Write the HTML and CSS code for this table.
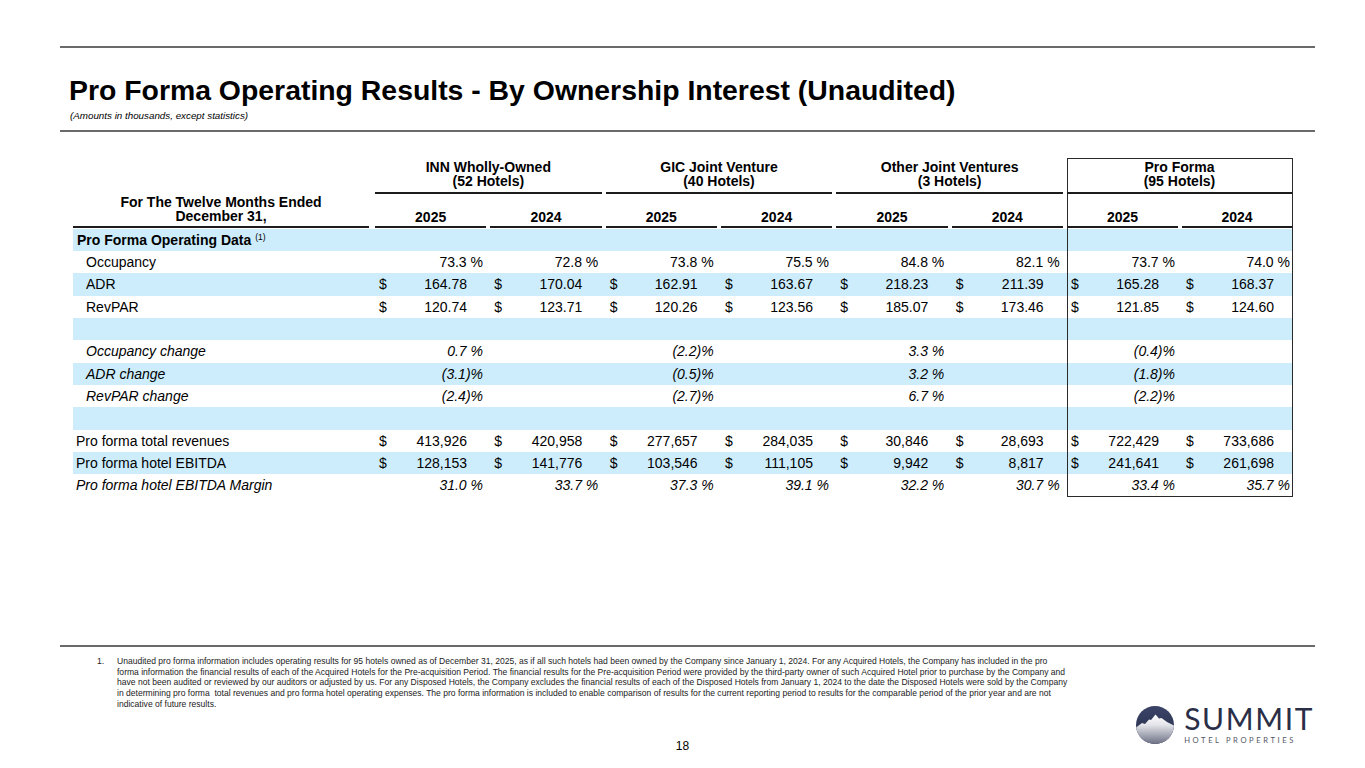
FILE: index.html
```html
<!DOCTYPE html>
<html lang="en">
<head>
<meta charset="utf-8">
<title>Pro Forma Operating Results</title>
<link rel="stylesheet" href="styles.css">
</head>
<body>
<div class="page">
  <div class="rule rule-top"></div>
  <header class="head">
    <h1 class="title">Pro Forma Operating Results - By Ownership Interest (Unaudited)</h1>
    <p class="subtitle">(Amounts in thousands, except statistics)</p>
  </header>
  <div class="rule rule-mid"></div>

  <div class="tbl">
    <div class="row hrow1">
      <div class="c"></div>
      <div class="c grp"><div class="ul">INN Wholly-Owned<br>(52 Hotels)</div></div>
      <div class="c grp"><div class="ul">GIC Joint Venture<br>(40 Hotels)</div></div>
      <div class="c grp"><div class="ul">Other Joint Ventures<br>(3 Hotels)</div></div>
      <div class="c grp pf-top"><div class="ul ul-last">Pro Forma<br>(95 Hotels)</div></div>
    </div>
    <div class="row hrow2">
      <div class="c hc"><div class="ul ul-lbl">For The Twelve Months Ended<br>December 31,</div></div>
      <div class="c hc"><div class="ul">2025</div></div>
      <div class="c hc"><div class="ul">2024</div></div>
      <div class="c hc"><div class="ul">2025</div></div>
      <div class="c hc"><div class="ul">2024</div></div>
      <div class="c hc"><div class="ul">2025</div></div>
      <div class="c hc"><div class="ul">2024</div></div>
      <div class="c hc pl"><div class="ul">2025</div></div>
      <div class="c hc pr"><div class="ul ul-last">2024</div></div>
    </div>

    <div class="row drow b">
      <div class="c lbl sec">Pro Forma Operating Data <sup>(1)</sup></div>
      <div class="c"></div><div class="c"></div><div class="c"></div><div class="c"></div><div class="c"></div><div class="c"></div>
      <div class="c pl"></div><div class="c pr"></div>
    </div>

    <div class="row drow">
      <div class="c lbl ind">Occupancy</div>
      <div class="c v"><div class="vi"><span class="pct">73.3 %</span></div></div>
      <div class="c v"><div class="vi"><span class="pct">72.8 %</span></div></div>
      <div class="c v"><div class="vi"><span class="pct">73.8 %</span></div></div>
      <div class="c v"><div class="vi"><span class="pct">75.5 %</span></div></div>
      <div class="c v"><div class="vi"><span class="pct">84.8 %</span></div></div>
      <div class="c v"><div class="vi"><span class="pct">82.1 %</span></div></div>
      <div class="c v pl"><div class="vi"><span class="pct">73.7 %</span></div></div>
      <div class="c v pr"><div class="vi"><span class="pct">74.0 %</span></div></div>
    </div>

    <div class="row drow b">
      <div class="c lbl ind">ADR</div>
      <div class="c v"><div class="vi"><span>$</span><span class="num">164.78</span></div></div>
      <div class="c v"><div class="vi"><span>$</span><span class="num">170.04</span></div></div>
      <div class="c v"><div class="vi"><span>$</span><span class="num">162.91</span></div></div>
      <div class="c v"><div class="vi"><span>$</span><span class="num">163.67</span></div></div>
      <div class="c v"><div class="vi"><span>$</span><span class="num">218.23</span></div></div>
      <div class="c v"><div class="vi"><span>$</span><span class="num">211.39</span></div></div>
      <div class="c v pl"><div class="vi"><span>$</span><span class="num">165.28</span></div></div>
      <div class="c v pr"><div class="vi"><span>$</span><span class="num">168.37</span></div></div>
    </div>

    <div class="row drow">
      <div class="c lbl ind">RevPAR</div>
      <div class="c v"><div class="vi"><span>$</span><span class="num">120.74</span></div></div>
      <div class="c v"><div class="vi"><span>$</span><span class="num">123.71</span></div></div>
      <div class="c v"><div class="vi"><span>$</span><span class="num">120.26</span></div></div>
      <div class="c v"><div class="vi"><span>$</span><span class="num">123.56</span></div></div>
      <div class="c v"><div class="vi"><span>$</span><span class="num">185.07</span></div></div>
      <div class="c v"><div class="vi"><span>$</span><span class="num">173.46</span></div></div>
      <div class="c v pl"><div class="vi"><span>$</span><span class="num">121.85</span></div></div>
      <div class="c v pr"><div class="vi"><span>$</span><span class="num">124.60</span></div></div>
    </div>

    <div class="row drow b">
      <div class="c lbl"></div>
      <div class="c"></div><div class="c"></div><div class="c"></div><div class="c"></div><div class="c"></div><div class="c"></div>
      <div class="c pl"></div><div class="c pr"></div>
    </div>

    <div class="row drow it">
      <div class="c lbl ind">Occupancy change</div>
      <div class="c v"><div class="vi"><span class="pct">0.7 %</span></div></div>
      <div class="c"></div>
      <div class="c v"><div class="vi"><span class="pct">(2.2)%</span></div></div>
      <div class="c"></div>
      <div class="c v"><div class="vi"><span class="pct">3.3 %</span></div></div>
      <div class="c"></div>
      <div class="c v pl"><div class="vi"><span class="pct">(0.4)%</span></div></div>
      <div class="c pr"></div>
    </div>

    <div class="row drow b it">
      <div class="c lbl ind">ADR change</div>
      <div class="c v"><div class="vi"><span class="pct">(3.1)%</span></div></div>
      <div class="c"></div>
      <div class="c v"><div class="vi"><span class="pct">(0.5)%</span></div></div>
      <div class="c"></div>
      <div class="c v"><div class="vi"><span class="pct">3.2 %</span></div></div>
      <div class="c"></div>
      <div class="c v pl"><div class="vi"><span class="pct">(1.8)%</span></div></div>
      <div class="c pr"></div>
    </div>

    <div class="row drow it">
      <div class="c lbl ind">RevPAR change</div>
      <div class="c v"><div class="vi"><span class="pct">(2.4)%</span></div></div>
      <div class="c"></div>
      <div class="c v"><div class="vi"><span class="pct">(2.7)%</span></div></div>
      <div class="c"></div>
      <div class="c v"><div class="vi"><span class="pct">6.7 %</span></div></div>
      <div class="c"></div>
      <div class="c v pl"><div class="vi"><span class="pct">(2.2)%</span></div></div>
      <div class="c pr"></div>
    </div>

    <div class="row drow b">
      <div class="c lbl"></div>
      <div class="c"></div><div class="c"></div><div class="c"></div><div class="c"></div><div class="c"></div><div class="c"></div>
      <div class="c pl"></div><div class="c pr"></div>
    </div>

    <div class="row drow">
      <div class="c lbl">Pro forma total revenues</div>
      <div class="c v"><div class="vi"><span>$</span><span class="num">413,926</span></div></div>
      <div class="c v"><div class="vi"><span>$</span><span class="num">420,958</span></div></div>
      <div class="c v"><div class="vi"><span>$</span><span class="num">277,657</span></div></div>
      <div class="c v"><div class="vi"><span>$</span><span class="num">284,035</span></div></div>
      <div class="c v"><div class="vi"><span>$</span><span class="num">30,846</span></div></div>
      <div class="c v"><div class="vi"><span>$</span><span class="num">28,693</span></div></div>
      <div class="c v pl"><div class="vi"><span>$</span><span class="num">722,429</span></div></div>
      <div class="c v pr"><div class="vi"><span>$</span><span class="num">733,686</span></div></div>
    </div>

    <div class="row drow b">
      <div class="c lbl">Pro forma hotel EBITDA</div>
      <div class="c v"><div class="vi"><span>$</span><span class="num">128,153</span></div></div>
      <div class="c v"><div class="vi"><span>$</span><span class="num">141,776</span></div></div>
      <div class="c v"><div class="vi"><span>$</span><span class="num">103,546</span></div></div>
      <div class="c v"><div class="vi"><span>$</span><span class="num">111,105</span></div></div>
      <div class="c v"><div class="vi"><span>$</span><span class="num">9,942</span></div></div>
      <div class="c v"><div class="vi"><span>$</span><span class="num">8,817</span></div></div>
      <div class="c v pl"><div class="vi"><span>$</span><span class="num">241,641</span></div></div>
      <div class="c v pr"><div class="vi"><span>$</span><span class="num">261,698</span></div></div>
    </div>

    <div class="row drow it">
      <div class="c lbl">Pro forma hotel EBITDA Margin</div>
      <div class="c v"><div class="vi"><span class="pct">31.0 %</span></div></div>
      <div class="c v"><div class="vi"><span class="pct">33.7 %</span></div></div>
      <div class="c v"><div class="vi"><span class="pct">37.3 %</span></div></div>
      <div class="c v"><div class="vi"><span class="pct">39.1 %</span></div></div>
      <div class="c v"><div class="vi"><span class="pct">32.2 %</span></div></div>
      <div class="c v"><div class="vi"><span class="pct">30.7 %</span></div></div>
      <div class="c v pl pb"><div class="vi"><span class="pct">33.4 %</span></div></div>
      <div class="c v pr pb"><div class="vi"><span class="pct">35.7 %</span></div></div>
    </div>
  </div>

  <div class="rule rule-foot"></div>

  <div class="bottom">
    <div class="note">
      <span class="note-n">1.</span>
      <p class="note-t">Unaudited pro forma information includes operating results for 95 hotels owned as of December 31, 2025, as if all such hotels had been owned by the Company since January 1, 2024. For any Acquired Hotels, the Company has included in the pro<br>forma information the financial results of each of the Acquired Hotels for the Pre-acquisition Period. The financial results for the Pre-acquisition Period were provided by the third-party owner of such Acquired Hotel prior to purchase by the Company and<br>have not been audited or reviewed by our auditors or adjusted by us. For any Disposed Hotels, the Company excludes the financial results of each of the Disposed Hotels from January 1, 2024 to the date the Disposed Hotels were sold by the Company<br>in determining pro forma&nbsp; total revenues and pro forma hotel operating expenses. The pro forma information is included to enable comparison of results for the current reporting period to results for the comparable period of the prior year and are not<br>indicative of future results.</p>
    </div>
    <div class="pnum">18</div>
    <div class="logo">
      <svg class="logo-mark" width="38" height="38" viewBox="0 0 38 38" aria-hidden="true">
        <defs>
          <clipPath id="lc"><circle cx="19" cy="19" r="19"/></clipPath>
          <linearGradient id="lg" x1="0" y1="0" x2="0" y2="1">
            <stop offset="0" stop-color="#ffffff"/>
            <stop offset="0.35" stop-color="#e4e5ea"/>
            <stop offset="0.7" stop-color="#a3a6b3"/>
            <stop offset="1" stop-color="#6c7083"/>
          </linearGradient>
          <linearGradient id="ln" x1="0" y1="0" x2="0" y2="1">
            <stop offset="0" stop-color="#3b4468"/>
            <stop offset="1" stop-color="#262c47"/>
          </linearGradient>
        </defs>
        <g clip-path="url(#lc)">
          <rect width="38" height="38" fill="url(#ln)"/>
          <path d="M0 21.5 L6 17 L9 18 L13 13.5 L15 14 L19.5 8.5 L23 12.5 L25.5 12 L31 16 L38 19.5 L38 38 L0 38 Z" fill="url(#lg)"/>
        </g>
      </svg>
      <div class="logo-text">
        <div class="logo-name">SUMMIT</div>
        <div class="logo-sub">HOTEL PROPERTIES</div>
      </div>
    </div>
  </div>
</div>
</body>
</html>
```

FILE: styles.css
```css
* { box-sizing: border-box; margin: 0; padding: 0; }

html, body {
  width: 1365px;
  height: 768px;
  overflow: hidden;
  background: #ffffff;
}

body {
  font-family: "Liberation Sans", Arial, sans-serif;
  color: #000000;
}

.page {
  width: 1365px;
  height: 768px;
  display: flex;
  flex-direction: column;
}

.rule {
  flex: none;
  margin-left: 60px;
  width: 1255px;
  height: 2px;
  background: #6a6a6a;
}

.rule-top { margin-top: 46px; }
.rule-mid { margin-top: 8.2px; }
.rule-foot { margin-top: 148px; }

.head { padding-left: 69px; }

.title {
  margin-top: 26px;
  font-size: 28.4px;
  line-height: 32px;
  font-weight: bold;
}

.subtitle {
  margin-top: 4px;
  padding-left: 1px;
  font-size: 9.8px;
  line-height: 12px;
  font-style: italic;
}

/* ---------- table ---------- */
.tbl {
  margin-top: 25.5px;
  margin-left: 73px;
  width: 1220px;
  font-size: 14px;
}

.row {
  display: grid;
  grid-template-columns: 302px repeat(6, 115.333px) 115px 111px;
}

.hrow1 { height: 36px; }
.hrow2 { height: 35px; }

.grp {
  grid-column: span 2;
  display: flex;
  flex-direction: column;
  justify-content: flex-end;
  text-align: center;
  font-weight: bold;
  line-height: 14px;
}

.grp .ul { padding-bottom: 4px; }

.ul {
  border-bottom: 2px solid #1c1c1c;
  margin-right: 4px;
}

.ul-last { margin-right: 1px; }

.hc {
  display: flex;
  flex-direction: column;
  justify-content: flex-end;
  padding-bottom: 1px;
  text-align: center;
  font-weight: bold;
  line-height: 14px;
}

.hc .ul { padding-bottom: 2px; }

.hc .ul-lbl {
  margin-right: 6px;
  line-height: 13.7px;
}

.pf-top { box-shadow: inset 1px 1px 0 #2a2a2a, inset -1px 0 0 #2a2a2a; }
.pl { box-shadow: inset 1px 0 0 #2a2a2a; }
.pr { box-shadow: inset -1px 0 0 #2a2a2a; }
.pl.pb { box-shadow: inset 1px -1px 0 #2a2a2a; }
.pr.pb { box-shadow: inset -1px -1px 0 #2a2a2a; }

.drow {
  height: 22.333px;
  line-height: 22.333px;
  white-space: nowrap;
}

.drow.b { background: #cdedfc; }
.drow.it { font-style: italic; }

.lbl { padding-left: 3px; }
.lbl.ind { padding-left: 13px; }
.lbl.sec { padding-left: 4px; font-weight: bold; }

.sec sup {
  font-size: 8.5px;
  font-weight: normal;
  vertical-align: 5px;
  line-height: 0;
}

.v { padding-left: 4px; }

.vi {
  width: 104px;
  display: flex;
  justify-content: space-between;
}

.num { padding-right: 16px; }
.pct { margin-left: auto; }

/* ---------- bottom ---------- */
.bottom {
  display: grid;
  grid-template-columns: 1fr auto 1fr;
  grid-template-rows: auto auto;
}

.note {
  grid-row: 1;
  grid-column: 1 / 4;
  margin-top: 9px;
  padding-left: 97px;
  display: grid;
  grid-template-columns: 20px auto;
  font-size: 8.55px;
  line-height: 10.9px;
  color: #222222;
  white-space: nowrap;
}

.pnum {
  grid-row: 2;
  grid-column: 2;
  margin-top: 29px;
  font-size: 12px;
  line-height: 14px;
}

.logo {
  grid-row: 1 / 3;
  grid-column: 3;
  justify-self: end;
  align-self: end;
  margin-right: 51px;
  margin-bottom: 9px;
  display: flex;
  align-items: center;
  gap: 10px;
}

.logo-mark { display: block; }

.logo-text {
  display: flex;
  flex-direction: column;
}

.logo-name {
  font-family: Lato, "Open Sans", sans-serif;
  font-weight: 400;
  font-size: 30px;
  line-height: 25px;
  letter-spacing: 1.6px;
  color: #2a2f47;
}

.logo-sub {
  margin-top: 5px;
  font-family: Lato, "Open Sans", sans-serif;
  font-weight: 400;
  font-size: 7.6px;
  line-height: 8px;
  letter-spacing: 2.6px;
  color: #555866;
}
```
